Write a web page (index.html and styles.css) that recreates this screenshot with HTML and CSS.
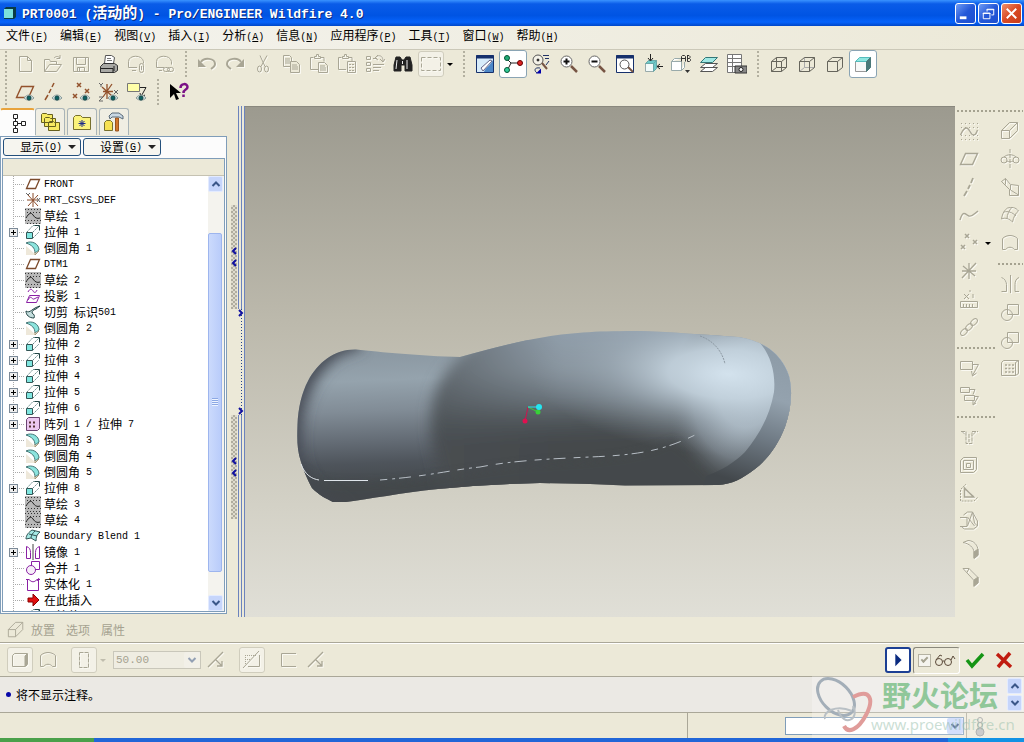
FILE: index.html
```
<!DOCTYPE html>
<html lang="zh-CN">
<head>
  <meta charset="UTF-8" />
  <title>PRT0001 (活动的) - Pro/ENGINEER Wildfire 4.0</title>
  <link rel="stylesheet" href="styles.css">
</head>
<body>
  <!-- Icon set -->
  <svg class="defs" width="0" height="0" aria-hidden="true">
    <symbol id="i-new" viewBox="0 0 20 20"><path d="M4.500 2.500h8l4 4v11h-12zM12.500 2.500v4h4"/></symbol>
    <symbol id="i-open" viewBox="0 0 20 20"><path d="M1.500 17.500v-12h5l1 2h6v3M1.500 17.500l5-7h12l-5 7zM11 4c2-2 4-2 6 0M17 1v3.500h-3.500"/></symbol>
    <symbol id="i-save" viewBox="0 0 20 20"><path d="M2.500 3.500h15v14h-15zM5.500 3.500v7h9v-7M6.500 17.500v-4h7v4M8.500 14v3"/></symbol>
    <symbol id="i-print" viewBox="0 0 20 20"><path d="M5.500 9.500l1-8h6l3 2-1 6" fill="#fff" stroke="#555"/><path d="M8 4.500h4M8 6.500h5" stroke="#777"/><path d="M1.500 12.500l3-3h11l3 2v5l-3 2h-14z" fill="#a8a8a4" stroke="#333"/><path d="M2 14.500h12v4M15 12v5" stroke="#222"/></symbol>
    <symbol id="i-mail" viewBox="0 0 20 20"><path d="M10 13.500H1.500v-6c0-7 14-7 15 0v2M5 16.500h4"/><rect x="12.500" y="9.500" width="4" height="9" rx="2"/><path d="M14.500 12v4"/></symbol>
    <symbol id="i-link" viewBox="0 0 20 20"><path d="M9 13.500H1.500v-6c0-7 14-7 15 0v3M4 16.500h3"/><rect x="8.500" y="13.500" width="6" height="4" rx="2"/><rect x="12.500" y="13.500" width="6" height="4" rx="2"/></symbol>
    <symbol id="i-undo" viewBox="0 0 20 20"><path d="M4 8c3-5 14-4 14 2 0 2-1 3-4 5" stroke-width="2"/><path d="M1 5v8h8z" fill="currentColor" stroke="none"/></symbol>
    <symbol id="i-redo" viewBox="0 0 20 20"><path d="M16 8c-3-5-14-4-14 2 0 2 1 3 4 5" stroke-width="2"/><path d="M19 5v8h-8z" fill="currentColor" stroke="none"/></symbol>
    <symbol id="i-cut" viewBox="0 0 20 20"><path d="M7 1.500l5 11M14 1.500l-6 11"/><ellipse cx="6.500" cy="15" rx="2" ry="3"/><ellipse cx="13.500" cy="15" rx="2" ry="3"/></symbol>
    <symbol id="i-copy" viewBox="0 0 20 20"><path d="M2.500 1.500h6l2 2v9h-8zM4 5h5M4 7h5M4 9h5"/><path d="M9.500 7.500h6l3 3v8h-9zM11 11h5M11 13h6M11 15h6" fill="#ece9d8"/></symbol>
    <symbol id="i-paste" viewBox="0 0 20 20"><path d="M9 15.500H1.500v-12h3M12 3.500h3v4M5.500 4.500v-2h2v-2h2v2h2v2z"/><path d="M9.500 8.500h6l3 3v7h-9zM11 12h5M11 14h6M11 16h6"/></symbol>
    <symbol id="i-pastes" viewBox="0 0 20 20"><path d="M9 15.500H1.500v-12h3M12 3.500h3v4M5.500 4.500v-2h2v-2h2v2h2v2z"/><path d="M10.500 7.500h8v11h-8zM12 10.500h2M15 10.500h2M12 13.500h2M15 13.500h2M12 16.500h2M15 16.500h2"/></symbol>
    <symbol id="i-regen" viewBox="0 0 20 20"><path d="M1.500 2.500h4v3h-4zM1.500 8.500h4v3h-4zM1.500 14.500h4v3h-4zM8 4.500h4M8 10.500h11M8 13.500h8M8 16.500h6M12 2c4-1 6 1 6 5M15 5l3 3 2-3M10 4l3-3M10 4l3 2"/></symbol>
    <symbol id="i-find" viewBox="0 0 20 20"><path d="M3 3h4l2 3h2l2-3h4l2 8v6h-7v-6H8v6H1v-6z" fill="#222"/><path d="M4 6l-1 9M14 6v9M9.500 7v3" stroke="#eee"/></symbol>
    <symbol id="i-select" viewBox="0 0 20 20"><path d="M.5 3.500h19v13H.5z" stroke-dasharray="4 2"/></symbol>
    <symbol id="i-repaint" viewBox="0 0 20 20"><path d="M1.500 1.500h17v17h-17z" fill="#d8ecfa" stroke="#16306c"/><path d="M1 3h18" stroke="#16306c" stroke-width="3"/><path d="M9 18c1-4 6-6 9-12v12z" fill="#4f88c8" stroke="none"/><path d="M6 14l2 3 9-10-2-1z" fill="#fff" stroke="#668"/></symbol>
    <symbol id="i-spin" viewBox="0 0 20 20"><path d="M3 4l5 5h9M8 9l-4 8"/><circle cx="4" cy="4" r="2.500" fill="#2a7" stroke="#053"/><circle cx="4" cy="16" r="2.500" fill="#3c9" stroke="#053"/><circle cx="17" cy="9" r="2.500" fill="#d22" stroke="#600"/></symbol>
    <symbol id="i-orient" viewBox="0 0 20 20"><circle cx="7" cy="6" r="5" fill="#f4f2e8" stroke="#555"/><path d="M11 9l5 6" stroke="#754" stroke-width="2"/><path d="M12 1.500h6M14 4.500h4M18 7l-3 4M9 14c-6-1-6 3-3 5" stroke="#236"/><path d="M5 19.500h5v-5z" fill="#00a" stroke="none"/><circle cx="7" cy="6" r="1" fill="#333"/></symbol>
    <symbol id="i-zoomin" viewBox="0 0 20 20"><path d="M12 12l6 6" stroke="#754" stroke-width="2.500"/><circle cx="7.500" cy="7.500" r="5.500" fill="#fff" stroke="#666"/><path d="M4.500 7.500h6M7.500 4.500v6" stroke="#111" stroke-width="2"/></symbol>
    <symbol id="i-zoomout" viewBox="0 0 20 20"><path d="M12 12l6 6" stroke="#754" stroke-width="2.500"/><circle cx="7.500" cy="7.500" r="5.500" fill="#fff" stroke="#666"/><path d="M4.500 7.500h6" stroke="#111" stroke-width="2"/></symbol>
    <symbol id="i-refit" viewBox="0 0 20 20"><path d="M1.500 1.500h17v17h-17z" fill="#fff" stroke="#16306c"/><path d="M1 3h18" stroke="#16306c" stroke-width="3"/><path d="M13 13l5 5" stroke="#754" stroke-width="2"/><circle cx="9.500" cy="10.500" r="4.500" stroke="#555"/></symbol>
    <symbol id="i-view" viewBox="0 0 20 20"><path d="M2.500 9.500h8v8h-8z" fill="#f2fafa" stroke="#9aa"/><path d="M2.500 9.500l3-3h8l-3 3zM10.500 17.500l3-3v-8l-3 3z" fill="#6cc8c8" stroke="#6aa8a8"/><path d="M7.500 0v6M5 4l2.500 3L10 4M20 12.500h-6M17 10l-3 2.500 3 2.500"/></symbol>
    <symbol id="i-saved" viewBox="0 0 20 20"><path d="M.5 7.500h10v9H.5zM.5 7.500l3-3h7M10.500 16.500l3-3V8" fill="#fff" stroke="#9aa"/><path d="M10.500 7.500v-5l1-1h2l1 1v5M10.500 4.500h4M16.500 1.500v6h2l1-1v-1l-1-1h-2M18 4.500l1-1v-1l-1-1h-2" stroke="#333"/><path d="M14 16h5l-2.500 3z" fill="#333" stroke="none"/></symbol>
    <symbol id="i-layers" viewBox="0 0 20 20"><path d="M1.500 17.500l5-4h12l-5 4zM1.500 13.500l5-4h12l-5 4z" fill="#fff" stroke="#555"/><path d="M1.500 8.500l5-5h12l-5 5z" fill="#9fe8e4" stroke="#377"/></symbol>
    <symbol id="i-camera" viewBox="0 0 20 20"><path d="M.5 .5h14v18H.5zM.5 4.500h14M.5 8.500h14M.5 12.500h14M5.500 .5v18" fill="#fff" stroke="#777"/><path d="M8 12h12v7H8z" fill="#888" stroke="#333"/><circle cx="14" cy="15.500" r="2" fill="#fff" stroke="#222"/></symbol>
    <symbol id="i-wire" viewBox="0 0 20 20"><path d="M2.500 7.500h10v10h-10zM7.500 3.500h10v10h-10zM2.500 7.500l5-4M12.500 7.500l5-4M12.500 17.500l5-4M2.500 17.500l5-4"/></symbol>
    <symbol id="i-hidden" viewBox="0 0 20 20"><path d="M7.500 3.500v10h10M2.500 17.500l5-4" stroke="#aaa"/><path d="M2.500 7.500h10v10h-10zM2.500 7.500l5-4h10v10l-5 4M12.500 7.500l5-4"/></symbol>
    <symbol id="i-nohid" viewBox="0 0 20 20"><path d="M2.500 7.500h10v10h-10zM2.500 7.500l5-4h10v10l-5 4M12.500 7.500l5-4"/></symbol>
    <symbol id="i-shade" viewBox="0 0 20 20"><path d="M2.500 7.500h11v10h-11z" fill="#f8f8f8" stroke="#999"/><path d="M2.500 7.500l4-4h11l-4 4z" fill="#8ee6e0" stroke="#5bb"/><path d="M13.500 7.500l4-4v10l-4 4z" fill="#4a7878" stroke="#4a7878"/></symbol>

    <symbol id="i-eye" viewBox="0 0 20 20"><path d="M9 16c3-4 7-4 10 0-3 3-7 3-10 0z" fill="#cdd" stroke="#8a9a98"/><circle cx="14" cy="16" r="2" fill="#0b6262" stroke="#144"/></symbol>
    <symbol id="i-plane" viewBox="0 0 20 20"><path d="M1.500 15.500l5-11h12l-5 11z" stroke-width="1.400"/></symbol>
    <symbol id="i-axis" viewBox="0 0 20 20"><path d="M2 18l3-5M6 11l2-4M9 5l2-4" stroke-width="1.500"/></symbol>
    <symbol id="i-points" viewBox="0 0 20 20"><path d="M6 1l4 4M10 1L6 5M14 7l4 4M18 7l-4 4M2 12l4 4M6 12l-4 4" stroke-width="1.500"/></symbol>
    <symbol id="i-csys" viewBox="0 0 20 20"><path d="M10 2v16M3 10h14M4 5l12 10M17 2L3 17" stroke-width="1.300"/></symbol>
    <symbol id="i-csys-xyz" viewBox="0 0 20 20"><path d="M8 2v15M4 9.500h10M3 5l10 9M13 2L4 15" stroke-width="1.300"/><path d="M0 1l2 2 2-2M2 3v2M15 8l4 4M19 8l-4 4M0 15h4l-4 4h4" stroke="#666"/></symbol>
    <symbol id="i-tag" viewBox="0 0 20 20"><path d="M.5 1.500h12v8H.5z" fill="#ffffa8" stroke="#777"/><path d="M13 5.500h6l-5 9M13 11l1 4 4-2" stroke="#222"/></symbol>
    <symbol id="i-help" viewBox="0 0 20 20"><path d="M1 2v14l4-4 2 6 3-1-3-6h5z" fill="#000" stroke="none"/><path d="M11.500 6c0-5 7-5 7-1 0 3-4 2-4 6M14.500 12.500v2.500" stroke="#7a1286" stroke-width="2.500"/></symbol>

    <symbol id="i-sketch" viewBox="0 0 20 20"><path d="M2 2.500h17M2 6.500h17M2 14.500h17M2 18.500h17" stroke-dasharray="1 3"/><path d="M1.500 14c2-4 3-7 6-7s4 7 7 7 3-3 4-5" stroke-width="1.400"/></symbol>
    <symbol id="i-line" viewBox="0 0 20 20"><path d="M5 19l3-5M9 12l2-4M12 6l2-5" stroke-width="1.800"/></symbol>
    <symbol id="i-curve" viewBox="0 0 20 20"><path d="M1 15c3-10 5-6 9-4 3 1 5-2 9-5" stroke-width="1.400"/></symbol>
    <symbol id="i-ruler" viewBox="0 0 20 20"><path d="M1.500 12.500h17v6h-17zM4.500 15v3M7.500 15v3M10.500 15v3M13.500 15v3M5 5l5 5M10 5l-5 5M11 1v2M14 5v4"/></symbol>
    <symbol id="i-chain" viewBox="0 0 20 20"><ellipse cx="5" cy="15" rx="4" ry="2.500" transform="rotate(-45 5 15)"/><ellipse cx="10" cy="10" rx="4" ry="2.500" transform="rotate(-45 10 10)"/><ellipse cx="15" cy="5" rx="4" ry="2.500" transform="rotate(-45 15 5)"/></symbol>
    <symbol id="i-note" viewBox="0 0 20 20"><path d="M1.500 3.500h12v8h-12zM13.500 6.500h6l-6 11M12.500 13l1 5 4-3"/></symbol>
    <symbol id="i-notes" viewBox="0 0 20 20"><path d="M1.500 1.500h9v5h-9zM5.500 9.500h10v5h-10zM11 3.500h5l-2 5M16 10.500h3.500l-5 8M14 15v4l3-2"/></symbol>
    <symbol id="i-hole" viewBox="0 0 20 20"><path d="M2 4.500h5v12h6v-12h6M3 4.500l4 4M17 4.500l-4 4M10 7v8" stroke-dasharray="4 1"/></symbol>
    <symbol id="i-shell" viewBox="0 0 20 20"><path d="M1.500 5.500l3-3h13v12l-3 3h-13zM4.500 5.500h10v9h-10zM7.500 8.500h4v4h-4z"/></symbol>
    <symbol id="i-rib" viewBox="0 0 20 20"><path d="M1.500 7v11h13M2 6l5-5M15 18l4-4" stroke-dasharray="2 1"/><path d="M5.500 5v9h9zM5 5l10 9" stroke-width="1.500"/></symbol>
    <symbol id="i-draft" viewBox="0 0 20 20"><path d="M1 6.500h7v9H1M4.500 4l4-3h5l5 9v5l-4 3h-9l-3-2M13.500 1l-5 14M13.500 1l2 11 3 3M8.500 6l7 9"/></symbol>
    <symbol id="i-round" viewBox="0 0 20 20"><path d="M4 3.500l5-2c6 0 10 5 10 10v5l-4 3v-6c0-5-5-9-11-10z"/><path d="M15 13l4-3v6l-4 3z" fill="currentColor"/></symbol>
    <symbol id="i-chamfer" viewBox="0 0 20 20"><path d="M4 1.500h6l9 9v5l-4 4v-6zM10 1.500l-2 4"/><path d="M15 13l4-3v6l-4 3z" fill="currentColor"/></symbol>
    <symbol id="i-extrude" viewBox="0 0 20 20"><path d="M1.500 9.500h8v8h-8zM1.500 9.500l8-8h8v8l-8 8M9.500 9.500l8-8" /></symbol>
    <symbol id="i-revolve" viewBox="0 0 20 20"><path d="M10 0v20" stroke-dasharray="4 1"/><circle cx="4" cy="11" r="3"/><circle cx="16" cy="11" r="3"/><path d="M4 8c3-3 9-3 12 0M7 12c2 1 4 1 6 0"/></symbol>
    <symbol id="i-sweep" viewBox="0 0 20 20"><path d="M1.500 4.500l4-3 5 6 8 1v10h-9v-6zM1.500 4.500l8 8M5.500 1.500v6M10.500 8v5l8 5"/></symbol>
    <symbol id="i-blend" viewBox="0 0 20 20"><path d="M1.500 14c1-6 3-9 6-11 4-1 8-1 11 3-3 2-5 6-6 11-3-3-7-5-11-3zM4 7c4-1 8 0 12 4M7 14c0-5 2-8 5-12"/></symbol>
    <symbol id="i-style" viewBox="0 0 20 20"><path d="M2.500 16.500v-11c4-4 11-4 15 0v11h-3c-2-3-7-3-9 0z"/></symbol>
    <symbol id="i-mirror" viewBox="0 0 20 20"><path d="M10.500 1v18M1.500 17.500h5v-7c0-3-2-6-5-7M19 17.500h-4v-7c0-3 1-6 4-7"/></symbol>
    <symbol id="i-merge" viewBox="0 0 20 20"><circle cx="7" cy="13" r="5.500"/><path d="M7.500 2.500h11v10h-11z"/></symbol>
    <symbol id="i-pattern" viewBox="0 0 20 20"><path d="M1.500 4.500l2-2h15v13l-3 2h-14zM15.500 17.500v-13l3-2"/><path d="M5 7h9M5 10.500h9M5 14h9" stroke-width="1.600" stroke-dasharray="2 1.500"/></symbol>

    <!-- Model tree icons -->
    <symbol id="t-plane" viewBox="0 0 16 16"><path d="M1.500 12.500l4-9h9l-4 9z" fill="#fff" stroke="#7b4a2c" stroke-width="1.300"/></symbol>
    <symbol id="t-csys" viewBox="0 0 16 16"><path d="M8 1v14M2 8h11M3 3l10 11M13 3L3 14" stroke="#8a4a28"/><path d="M1 1l2 2 2-2M12 6l3 4M15 6l-3 4" stroke="#666"/></symbol>
    <symbol id="t-sketch" viewBox="0 0 16 16"><path d="M0 0h16v16H0z" fill="#b8b8b8" stroke="none"/><path d="M0 1.500h16M2 4.500h14M0 12.500h16M2 15.500h14" stroke="#333" stroke-dasharray="1 2"/><path d="M1 10c3-5 5-6 7-3s4 4 7 3" stroke="#222"/></symbol>
    <symbol id="t-extrude" viewBox="0 0 16 16"><path d="M2 8l6-6.500h6M8 8l6-6M8 14l6-6" stroke="#688" stroke-dasharray="2 1"/><path d="M1.500 8.500h6v6h-6z" fill="#7fe6e0" stroke="#355"/><path d="M10 1.500h4.500v5" stroke="#244"/></symbol>
    <symbol id="t-round" viewBox="0 0 16 16"><path d="M1 6l10 9H1z" fill="#eee8da"/><path d="M1 3c6-3 13 1 13 7l-4 3c0-5-3-8-9-10z" fill="#8ce4de" stroke="#477"/><path d="M10 12v3l4-4" stroke="#a97"/></symbol>
    <symbol id="t-project" viewBox="0 0 16 16"><path d="M3 4c2-4 4-3 5-1s3 2 4-1M1.500 14.500l3-7h10l-3 7zM3 12c3-6 4 0 6-1l4-2" stroke="#8a20a4"/></symbol>
    <symbol id="t-trim" viewBox="0 0 16 16"><path d="M1 7c4 3 6-3 14-5l-4 3c-3 1-4 2-4 4 2 1 3 3 2 5-5 0-8-3-8-7z" fill="#c4dede" stroke="#244"/></symbol>
    <symbol id="t-pattern" viewBox="0 0 16 16"><path d="M1.500 3.500l2-2h11v11l-2 2h-11z" fill="#ecc8f0" stroke="#6b4470"/><path d="M4 6.500h8M4 10.500h8" stroke="#533" stroke-width="2" stroke-dasharray="2 2"/></symbol>
    <symbol id="t-blend" viewBox="0 0 16 16"><path d="M1 11c0-4 3-7 6-9l8 2c-3 2-4 5-4 9l-5-3zM4 6l8 2M6 10c0-3 2-5 4-7" fill="#a4e8e4" stroke="#355"/></symbol>
    <symbol id="t-mirror" viewBox="0 0 16 16"><path d="M8 0v16" stroke="#444"/><path d="M1.500 14.500v-12c3 1 4 3 4 6v6zM14.500 14.500v-12c-3 1-4 3-4 6v6z" stroke="#8a20a4"/></symbol>
    <symbol id="t-merge" viewBox="0 0 16 16"><path d="M6.500 1.500h8v8h-8z" stroke="#8a20a4"/><circle cx="6" cy="10" r="4.500" fill="#f6eef8" stroke="#8a20a4"/></symbol>
    <symbol id="t-solid" viewBox="0 0 16 16"><path d="M1 3.500h3c3 3 5 3 8 0h3M2.500 4v10.500h11V4M12 5l2-3" stroke="#8a20a4"/></symbol>
    <symbol id="t-insert" viewBox="0 0 16 16"><path d="M3 6h5V2l6 6-6 6v-4H3z" fill="#e01010" stroke="#800"/></symbol>

    <symbol id="chev-up" viewBox="0 0 10 10"><path d="M1.500 7L5 3.500 8.500 7" stroke="#3a5688" stroke-width="2"/></symbol>
    <symbol id="chev-down" viewBox="0 0 10 10"><path d="M1.500 3L5 6.500 8.500 3" stroke="#3a5688" stroke-width="2"/></symbol>
  </svg>

  <header class="titlebar">
    <svg class="app-icon" viewBox="0 0 14 14"><path d="M1 3l2-2h10v10l-2 2H1z" fill="#0a3b46"/><path d="M1 3h9v9H1z" fill="#7be0dc"/></svg>
    <h1>PRT0001 (<span class="zh">活动的</span>) - Pro/ENGINEER Wildfire 4.0</h1>
    <div class="window-buttons">
      <button aria-label="最小化"><svg viewBox="0 0 20 20"><path d="M4 14.500h7" stroke-width="3"/></svg></button>
      <button aria-label="还原"><svg viewBox="0 0 20 20"><path d="M8.500 8V5.500h7v6H13M4.500 9.500h7v6h-7zM4 10h8M8 6h8"/></svg></button>
      <button class="close" aria-label="关闭"><svg viewBox="0 0 20 20"><path d="M5 5l10 10M15 5L5 15" stroke-width="2"/></svg></button>
    </div>
  </header>

  <nav class="menubar">
    <a href="#">文件<span class="en">(<u>F</u>)</span></a>
    <a href="#">编辑<span class="en">(<u>E</u>)</span></a>
    <a href="#">视图<span class="en">(<u>V</u>)</span></a>
    <a href="#">插入<span class="en">(<u>I</u>)</span></a>
    <a href="#">分析<span class="en">(<u>A</u>)</span></a>
    <a href="#">信息<span class="en">(<u>N</u>)</span></a>
    <a href="#">应用程序<span class="en">(<u>P</u>)</span></a>
    <a href="#">工具<span class="en">(<u>T</u>)</span></a>
    <a href="#">窗口<span class="en">(<u>W</u>)</span></a>
    <a href="#">帮助<span class="en">(<u>H</u>)</span></a>
  </nav>

  <!-- Toolbars -->
  <div class="toolbar">
    <span class="grip first"></span>
    <button class="tool dim" aria-label="新建"><svg><use href="#i-new"/></svg></button>
    <button class="tool dim" aria-label="打开"><svg><use href="#i-open"/></svg></button>
    <button class="tool dim" aria-label="保存"><svg><use href="#i-save"/></svg></button>
    <button class="tool" aria-label="打印"><svg><use href="#i-print"/></svg></button>
    <button class="tool dim" aria-label="发送邮件"><svg><use href="#i-mail"/></svg></button>
    <button class="tool dim" aria-label="发送链接"><svg><use href="#i-link"/></svg></button>
    <span class="grip"></span>
    <button class="tool dim" aria-label="撤消"><svg><use href="#i-undo"/></svg></button>
    <button class="tool dim" aria-label="重做"><svg><use href="#i-redo"/></svg></button>
    <button class="tool dim" aria-label="剪切"><svg><use href="#i-cut"/></svg></button>
    <button class="tool dim" aria-label="复制"><svg><use href="#i-copy"/></svg></button>
    <button class="tool dim" aria-label="粘贴"><svg><use href="#i-paste"/></svg></button>
    <button class="tool dim" aria-label="选择性粘贴"><svg><use href="#i-pastes"/></svg></button>
    <button class="tool dim" aria-label="再生"><svg><use href="#i-regen"/></svg></button>
    <button class="tool" aria-label="查找"><svg><use href="#i-find"/></svg></button>
    <button class="tool dim raised" aria-label="选取框"><svg><use href="#i-select"/></svg></button>
    <button class="drop" aria-label="选取方式"></button>
    <span class="grip"></span>
    <button class="tool" aria-label="重画"><svg><use href="#i-repaint"/></svg></button>
    <button class="tool on" aria-label="旋转中心"><svg><use href="#i-spin"/></svg></button>
    <button class="tool" aria-label="定向模式"><svg><use href="#i-orient"/></svg></button>
    <button class="tool" aria-label="放大"><svg><use href="#i-zoomin"/></svg></button>
    <button class="tool" aria-label="缩小"><svg><use href="#i-zoomout"/></svg></button>
    <button class="tool" aria-label="重新调整"><svg><use href="#i-refit"/></svg></button>
    <button class="tool" aria-label="重定向"><svg><use href="#i-view"/></svg></button>
    <button class="tool" aria-label="视图列表"><svg><use href="#i-saved"/></svg></button>
    <button class="tool" aria-label="层"><svg><use href="#i-layers"/></svg></button>
    <button class="tool" aria-label="视图管理器"><svg><use href="#i-camera"/></svg></button>
    <span class="grip"></span>
    <button class="tool line" aria-label="线框"><svg><use href="#i-wire"/></svg></button>
    <button class="tool line" aria-label="隐藏线"><svg><use href="#i-hidden"/></svg></button>
    <button class="tool line" aria-label="无隐藏线"><svg><use href="#i-nohid"/></svg></button>
    <button class="tool on" aria-label="着色"><svg><use href="#i-shade"/></svg></button>
  </div>
  <div class="toolbar">
    <span class="grip first"></span>
    <button class="tool datum" aria-label="基准平面开关"><svg><use href="#i-plane"/><use href="#i-eye"/></svg></button>
    <button class="tool datum" aria-label="基准轴开关"><svg><use href="#i-axis"/><use href="#i-eye"/></svg></button>
    <button class="tool datum" aria-label="基准点开关"><svg><use href="#i-points"/><use href="#i-eye"/></svg></button>
    <button class="tool datum" aria-label="坐标系开关"><svg><use href="#i-csys-xyz"/><use href="#i-eye"/></svg></button>
    <button class="tool datum" aria-label="注释开关"><svg><use href="#i-tag"/><use href="#i-eye"/></svg></button>
    <span class="grip"></span>
    <button class="tool" aria-label="上下文帮助"><svg><use href="#i-help"/></svg></button>
  </div>

  <main class="workspace">
    <aside class="navigator">
      <div class="tabs">
        <button class="tab active" aria-label="模型树"><svg viewBox="0 0 20 20"><path d="M5.500 1.500h4v4h-4zM5.500 8.500h4v4h-4zM5.500 15.500h4v4h-4zM13.500 8.500h4v4h-4zM7.500 5.500v3M7.500 12.500v3M9.500 10.500h4"/></svg></button>
        <button class="tab" aria-label="文件夹浏览器"><svg viewBox="0 0 20 20"><path d="M1.500 2.500l1-1h4l1 1h5v8h-11zM4.500 6.500l1-1h4l1 1h5v8h-11zM8.500 10.500l1-1h4l1 1h5v8h-11z" fill="#f7ea62" stroke="#66601e"/></svg></button>
        <button class="tab" aria-label="收藏夹"><svg viewBox="0 0 20 20"><path d="M1.500 5.500l2-2h5l2 2h8v12h-17z" fill="#fbf37a" stroke="#77702e"/><path d="M10 8v7M6.500 11.500h7M7.500 9l5 5M12.500 9l-5 5" stroke="#1a2a8a"/></svg></button>
        <button class="tab" aria-label="连接"><svg viewBox="0 0 20 20"><path d="M.5 10.500l2-2h4l2 2v8h-8z" fill="#f7e152" stroke="#77702e"/><path d="M11.500 6h3v13h-3z" fill="#d2762c" stroke="#9a5420"/><path d="M5 4l3-3h7l4 3v3l-4-2H8l-2 2z" fill="#c9d8e4" stroke="#5b6a78"/></svg></button>
      </div>
      <div class="panel">
        <div class="panel-buttons">
          <button>显示<span class="en">(<u>O</u>)</span></button>
          <button>设置<span class="en">(<u>G</u>)</span></button>
        </div>
        <div class="tree-box">
          <div class="tree-head"></div>
          <div class="tree-body">
            <ul class="tree">
              <li><svg><use href="#t-plane"/></svg><span class="en">FRONT</span></li>
              <li><svg><use href="#t-csys"/></svg><span class="en">PRT_CSYS_DEF</span></li>
              <li><svg><use href="#t-sketch"/></svg>草绘<span class="en"> 1</span></li>
              <li class="has-kids"><svg><use href="#t-extrude"/></svg>拉伸<span class="en"> 1</span></li>
              <li><svg><use href="#t-round"/></svg>倒圆角<span class="en"> 1</span></li>
              <li><svg><use href="#t-plane"/></svg><span class="en">DTM1</span></li>
              <li><svg><use href="#t-sketch"/></svg>草绘<span class="en"> 2</span></li>
              <li><svg><use href="#t-project"/></svg>投影<span class="en"> 1</span></li>
              <li><svg><use href="#t-trim"/></svg>切剪<span class="en"> </span>标识<span class="en">501</span></li>
              <li><svg><use href="#t-round"/></svg>倒圆角<span class="en"> 2</span></li>
              <li class="has-kids"><svg><use href="#t-extrude"/></svg>拉伸<span class="en"> 2</span></li>
              <li class="has-kids"><svg><use href="#t-extrude"/></svg>拉伸<span class="en"> 3</span></li>
              <li class="has-kids"><svg><use href="#t-extrude"/></svg>拉伸<span class="en"> 4</span></li>
              <li class="has-kids"><svg><use href="#t-extrude"/></svg>拉伸<span class="en"> 5</span></li>
              <li class="has-kids"><svg><use href="#t-extrude"/></svg>拉伸<span class="en"> 6</span></li>
              <li class="has-kids"><svg><use href="#t-pattern"/></svg>阵列<span class="en"> 1 / </span>拉伸<span class="en"> 7</span></li>
              <li><svg><use href="#t-round"/></svg>倒圆角<span class="en"> 3</span></li>
              <li><svg><use href="#t-round"/></svg>倒圆角<span class="en"> 4</span></li>
              <li><svg><use href="#t-round"/></svg>倒圆角<span class="en"> 5</span></li>
              <li class="has-kids"><svg><use href="#t-extrude"/></svg>拉伸<span class="en"> 8</span></li>
              <li><svg><use href="#t-sketch"/></svg>草绘<span class="en"> 3</span></li>
              <li><svg><use href="#t-sketch"/></svg>草绘<span class="en"> 4</span></li>
              <li><svg><use href="#t-blend"/></svg><span class="en">Boundary Blend 1</span></li>
              <li class="has-kids"><svg><use href="#t-mirror"/></svg>镜像<span class="en"> 1</span></li>
              <li><svg><use href="#t-merge"/></svg>合并<span class="en"> 1</span></li>
              <li><svg><use href="#t-solid"/></svg>实体化<span class="en"> 1</span></li>
              <li><svg><use href="#t-insert"/></svg>在此插入</li>
              <li><svg><use href="#t-extrude"/></svg><span class="en"> *</span>拉伸</li>
            </ul>
            <div class="scrollbar">
              <button aria-label="向上滚动"><svg><use href="#chev-up"/></svg></button>
              <div class="track"><div class="thumb"></div></div>
              <button aria-label="向下滚动"><svg><use href="#chev-down"/></svg></button>
            </div>
          </div>
        </div>
      </div>
    </aside>

    <div class="splitter">
      <div class="hatches">
        <span class="hatch"><svg viewBox="0 0 6 20"><path d="M5 1L2 4l3 3M5 13l-3 3 3 3"/></svg></span>
        <span class="hatch"><svg viewBox="0 0 6 20"><path d="M5 1L2 4l3 3M5 13l-3 3 3 3"/></svg></span>
      </div>
      <div class="rails">
        <span class="dots">
          <svg viewBox="0 0 6 8"><path d="M1 1l3 3-3 3"/></svg>
          <svg viewBox="0 0 6 8"><path d="M1 1l3 3-3 3"/></svg>
        </span>
      </div>
    </div>

    <section class="viewport">
      <svg viewBox="245 107 710 510" preserveAspectRatio="xMidYMid meet" role="img" aria-label="着色模型">
        <defs>
          <clipPath id="body"><path d="M356 349.500C380 352 420 356 460 357C485 350 510 343 545 337C575 332 600 331 642 331C670 332 710 335 738 337C750 339 758 342 765 346C776 352 785 363 789 376C793 392 791 410 785 427C778 445 768 459 755 469C742 479 732 484 718 485L625 485.500L590 484L540 483C500 484 470 486 438 489C400 493 370 499 346 502L333 502C325 498 319 495 312 488C307 478 304 472 301 462C297 450 297 440 297.500 425C298 408 302 392 308 381C318 362 335 349 356 349.500z"/></clipPath>
          <linearGradient id="neck" gradientUnits="userSpaceOnUse" x1="0" y1="349" x2="6" y2="502">
            <stop offset="0" stop-color="#85919b"/><stop offset=".3" stop-color="#95a3ad"/><stop offset=".5" stop-color="#818c96"/><stop offset=".7" stop-color="#636b74"/><stop offset=".84" stop-color="#4e545b"/><stop offset="1" stop-color="#43484b"/>
          </linearGradient>
          <linearGradient id="hull" gradientUnits="userSpaceOnUse" x1="560" y1="331" x2="566" y2="485">
            <stop offset="0" stop-color="#919fac"/><stop offset=".25" stop-color="#87939d"/><stop offset=".42" stop-color="#6e7880"/><stop offset=".58" stop-color="#50565a"/><stop offset=".7" stop-color="#44494c"/><stop offset="1" stop-color="#44494c"/>
          </linearGradient>
          <linearGradient id="crease" gradientUnits="userSpaceOnUse" x1="425" y1="0" x2="560" y2="0">
            <stop offset="0" stop-color="#4b5054" stop-opacity=".7"/><stop offset="1" stop-color="#4b5054" stop-opacity="0"/>
          </linearGradient>
          <radialGradient id="shine" gradientUnits="userSpaceOnUse" cx="0" cy="0" r="1" gradientTransform="translate(728 374) rotate(3) scale(200 82)">
            <stop offset="0" stop-color="#d3e2ed"/><stop offset=".3" stop-color="#c3d2dd" stop-opacity=".9"/><stop offset=".6" stop-color="#a5b3be" stop-opacity=".5"/><stop offset="1" stop-color="#8a96a0" stop-opacity="0"/>
          </radialGradient>
          <radialGradient id="nose" gradientUnits="userSpaceOnUse" cx="0" cy="0" r="1" gradientTransform="translate(752 385) rotate(20) scale(80 108)">
            <stop offset="0" stop-color="#c9d8e3"/><stop offset=".4" stop-color="#b4c2cd" stop-opacity=".95"/><stop offset=".7" stop-color="#87929c" stop-opacity=".7"/><stop offset="1" stop-color="#50565a" stop-opacity="0"/>
          </radialGradient>
          <linearGradient id="rim" gradientUnits="userSpaceOnUse" x1="780" y1="350" x2="740" y2="482">
            <stop offset="0" stop-color="#8d9ba7"/><stop offset=".35" stop-color="#94a2ae"/><stop offset=".65" stop-color="#6f7a84"/><stop offset="1" stop-color="#43484c"/>
          </linearGradient>
          <filter id="soft" x="-20%" y="-20%" width="140%" height="140%"><feGaussianBlur stdDeviation="7"/></filter>
          <filter id="softer" x="-20%" y="-20%" width="140%" height="140%"><feGaussianBlur stdDeviation="4"/></filter>
        </defs>
        <g clip-path="url(#body)">
          <path d="M290 340h260v170h-260z" fill="url(#neck)"/>
          <path d="M360 340C315 345 292 395 292 440C292 480 310 500 345 512" fill="none" stroke="#444a52" stroke-width="18" filter="url(#soft)"/>
          <g filter="url(#soft)">
            <path d="M475 345C445 365 431 390 431 420C428 455 445 470 440 520H850V300H500z" fill="url(#hull)"/>
            <path d="M475 345C445 365 431 390 431 420C428 455 445 470 440 520H560V300H500z" fill="url(#crease)"/>
          </g>
          <path d="M630 270h190v230h-190z" fill="url(#nose)"/>
          <path d="M500 280h320v220h-320z" fill="url(#shine)"/>
          <path d="M301 468C320 487 350 484 400 481C450 476 500 465 545 463C600 460 650 456 672 440L715 480V505L330 520L300 490z" fill="#44494c" opacity=".6" filter="url(#softer)"/>
          <path d="M757 340C770 352 776 372 774 392C770 415 760 434 745 452C734 463 722 470 706 476L700 495H810V330z" fill="url(#rim)"/>
        </g>
        <path d="M301 464C305 475 312 479 319 480M324 480.500h44" fill="none" stroke="#dfe5ea"/>
        <path d="M380 480C430 476 450 470 480 467C510 461 545 459 590 457C640 455 665 450 697 434" fill="none" stroke="#b7bec5" stroke-dasharray="7 5 3 4 12 8"/>
        <path d="M700 336C712 340 722 350 725 364" fill="none" stroke="#8c98a2" stroke-dasharray="2 1"/>
        <path d="M528 407l-3 14" stroke="#d0124e"/><path d="M528 407l10 5" stroke="#38d038"/><path d="M528 407h11" stroke="#25e6f0"/>
        <circle cx="525" cy="421" r="2.500" fill="#e01050"/><circle cx="538" cy="412" r="2.500" fill="#38d038"/><circle cx="539" cy="407" r="3" fill="#25e6f0"/>
      </svg>
    </section>

    <aside class="feature-bar">
      <div class="feature-col">
        <span class="bar first"></span>
        <button class="tool dim" aria-label="草绘"><svg><use href="#i-sketch"/></svg></button>
        <button class="tool dim" aria-label="基准平面"><svg><use href="#i-plane"/></svg></button>
        <button class="tool dim" aria-label="基准轴"><svg><use href="#i-line"/></svg></button>
        <button class="tool dim" aria-label="基准曲线"><svg><use href="#i-curve"/></svg></button>
        <div class="pair"><button class="tool dim" aria-label="基准点"><svg><use href="#i-points"/></svg></button><button class="drop" aria-label="基准点类型"></button></div>
        <button class="tool dim" aria-label="坐标系"><svg><use href="#i-csys"/></svg></button>
        <button class="tool dim" aria-label="分析特征"><svg><use href="#i-ruler"/></svg></button>
        <button class="tool dim" aria-label="参照"><svg><use href="#i-chain"/></svg></button>
        <span class="bar"></span>
        <button class="tool dim" aria-label="注释"><svg><use href="#i-note"/></svg></button>
        <button class="tool dim" aria-label="注释元素"><svg><use href="#i-notes"/></svg></button>
        <span class="bar"></span>
        <button class="tool dim" aria-label="孔"><svg><use href="#i-hole"/></svg></button>
        <button class="tool dim" aria-label="壳"><svg><use href="#i-shell"/></svg></button>
        <button class="tool dim" aria-label="筋"><svg><use href="#i-rib"/></svg></button>
        <button class="tool dim" aria-label="拔模"><svg><use href="#i-draft"/></svg></button>
        <button class="tool dim" aria-label="倒圆角"><svg><use href="#i-round"/></svg></button>
        <button class="tool dim" aria-label="倒角"><svg><use href="#i-chamfer"/></svg></button>
      </div>
      <div class="feature-col narrow">
        <span class="bar first"></span>
        <button class="tool dim" aria-label="拉伸"><svg><use href="#i-extrude"/></svg></button>
        <button class="tool dim" aria-label="旋转"><svg><use href="#i-revolve"/></svg></button>
        <button class="tool dim" aria-label="扫描"><svg><use href="#i-sweep"/></svg></button>
        <button class="tool dim" aria-label="边界混合"><svg><use href="#i-blend"/></svg></button>
        <button class="tool dim" aria-label="造型"><svg><use href="#i-style"/></svg></button>
        <span class="bar"></span>
        <button class="tool dim" aria-label="镜像"><svg><use href="#i-mirror"/></svg></button>
        <button class="tool dim" aria-label="合并"><svg><use href="#i-merge"/></svg></button>
        <button class="tool dim" aria-label="修剪"><svg><use href="#i-merge"/></svg></button>
        <button class="tool dim" aria-label="阵列"><svg><use href="#i-pattern"/></svg></button>
      </div>
    </aside>
  </main>

  <!-- Dashboard -->
  <div class="dash-tabs">
    <svg class="dim"><use href="#i-extrude"/></svg>
    <button disabled>放置</button>
    <button disabled>选项</button>
    <button disabled>属性</button>
  </div>
  <div class="dashboard">
    <button class="tool dim raised" aria-label="实体"><svg viewBox="0 0 20 20"><path d="M2.500 5.500l2-2h13v11l-2 2h-13z"/><path d="M15 6l2-2v10l-2 2z" fill="currentColor"/></svg></button>
    <button class="tool dim" aria-label="曲面"><svg><use href="#i-style"/></svg></button>
    <span class="gap"></span>
    <button class="tool dim raised" aria-label="深度"><svg viewBox="0 0 20 20"><path d="M5.500 2.500h9v15h-9z" stroke-dasharray="4 1"/></svg></button>
    <button class="drop dim" aria-label="深度选项"></button>
    <div class="combo depth"><select aria-label="深度值" disabled><option>50.00</option></select><svg><use href="#chev-down"/></svg></div>
    <button class="tool dim" aria-label="反向"><svg viewBox="0 0 20 20"><path d="M2 17L17 2M10 10l6 6M16 11v5h-5" stroke-width="1.300"/></svg></button>
    <span class="gap"></span>
    <button class="tool dim raised" aria-label="去除材料"><svg viewBox="0 0 20 20"><path d="M3 5.500h11M3.500 5v10M3 9.500h6" stroke-dasharray="1 1"/><path d="M1 18L17 1M6 16.500h11.500V5"/></svg></button>
    <span class="gap"></span>
    <button class="tool dim" aria-label="加厚"><svg viewBox="0 0 20 20"><path d="M18 3.500H3.500v13H18"/></svg></button>
    <button class="tool dim" aria-label="反向加厚"><svg viewBox="0 0 20 20"><path d="M2 17L17 2M10 10l6 6M16 11v5h-5" stroke-width="1.300"/></svg></button>
    <div class="dash-right">
      <button class="play" aria-label="继续"><svg viewBox="0 0 20 20"><path d="M7 3l7 7-7 7z" fill="#0a2a80" stroke="none"/></svg></button>
      <label class="preview"><input type="checkbox" checked disabled aria-label="预览"><svg viewBox="0 0 22 14"><circle cx="5" cy="9" r="3.500"/><circle cx="14" cy="9" r="3.500"/><path d="M8.500 8h2M2 7l4-5 2 1M17 7l2-4 2 3"/></svg></label>
      <button class="tool" aria-label="确定"><svg viewBox="0 0 20 20"><path d="M2 10l5 6L18 4" stroke="#159515" stroke-width="3.500"/></svg></button>
      <button class="tool" aria-label="取消"><svg viewBox="0 0 20 20"><path d="M3 4l14 13M16 3L4 17" stroke="#c01c10" stroke-width="3.500"/></svg></button>
    </div>
  </div>

  <footer class="footer">
    <div class="message">
      <p>将不显示注释。</p>
      <div class="scrollbar">
        <button aria-label="上一条"><svg><use href="#chev-up"/></svg></button>
        <button aria-label="下一条"><svg><use href="#chev-down"/></svg></button>
      </div>
    </div>
    <div class="status">
      <div class="status-left"></div>
      <div class="status-filter">
        <div class="combo filter"><select aria-label="过滤器"><option></option></select><svg><use href="#chev-down"/></svg></div>
      </div>
      <svg class="light" viewBox="0 0 12 20"><circle cx="6" cy="3" r="2.500"/><circle cx="6" cy="8" r="2.500"/><circle cx="6" cy="15" r="4" fill="#bbb"/></svg>
    </div>
    <div class="watermark">
      <svg viewBox="0 0 60 60">
        <ellipse cx="22" cy="21" rx="22" ry="14" transform="rotate(45 22 21)" fill="none" stroke="#a3aeb8" stroke-width="3"/>
        <path d="M39 21C57 12 60 24 52 39C44 54 34 58 30 50" fill="none" stroke="#e09c9a" stroke-width="4"/>
        <path d="M38 35C22 28 8 36 11 43M24 34C30 52 46 43 39 30" fill="none" stroke="#b9c0c5" stroke-width="2"/>
      </svg>
      <div class="brand"><strong>野火论坛</strong><span>www.proewildfire.cn</span></div>
    </div>
  </footer>
  <div class="taskbar"><span class="start"></span><span class="tasks"></span><span class="tray"></span></div>
</body>
</html>
```
FILE: styles.css
```
* { box-sizing: border-box; }
body {
  margin: 0; min-height: 100vh; height: 100vh; overflow: hidden;
  display: flex; flex-direction: column;
  background: #ece9d8; color: #000;
  font-family: "Noto Sans CJK SC", sans-serif; font-size: 12px; line-height: 16px;
}
button {
  border: 0; padding: 0; margin: 0; background: none;
  color: inherit; font: inherit;
}
svg { display: block; fill: none; stroke: none; }
.defs { position: absolute; }
.en {
  font-family: "Liberation Mono", monospace; font-size: 10px; white-space: pre;
}

/* title and menus */
.titlebar {
  display: flex; align-items: center; flex: none;
  height: 26px; padding: 0 2px 0 3px;
  background: linear-gradient(#3a93ff 0, #0a5ce8 15%, #0054e3 60%, #0663fb 85%, #0047c8 100%);
}
.app-icon { width: 14px; height: 14px; }
.titlebar h1 {
  flex: 1; margin: 0 0 0 5px; color: #fff;
  font: bold 13px/24px "Liberation Mono", monospace;
  text-shadow: 1px 1px 0 #0a2a80; white-space: nowrap;
}
.titlebar .zh { font-family: "Noto Sans CJK SC", sans-serif; font-size: 15px; }
.window-buttons { display: flex; gap: 2px; }
.window-buttons button {
  width: 21px; height: 21px; border: 1px solid #fff; border-radius: 3px;
  background: linear-gradient(135deg, #6f9cf5, #2458d8 50%, #1d4fd0);
}
.window-buttons .close { background: linear-gradient(135deg, #f0906c, #d94a24 50%, #c83c18); }
.window-buttons svg { width: 19px; height: 19px; stroke: #fff; }
.menubar {
  display: flex; gap: 12px; flex: none;
  height: 24px; padding: 1px 6px 0;
  background: linear-gradient(90deg, #f4f3ee, #ece9d8); border-bottom: 1px solid #cbc8b8;
}
.menubar a { color: #000; text-decoration: none; white-space: nowrap; }

/* toolbars */
.toolbar { display: flex; align-items: center; flex: none; height: 28px; }
.tool {
  display: flex; align-items: center; justify-content: center; flex: none;
  width: 28px; height: 28px; border-radius: 3px; color: #222;
}
.tool svg { width: 20px; height: 20px; stroke: currentColor; }
.tool.line { color: #66655c; }
.tool.datum { color: #93522c; }
.dim { color: #a9a695; stroke: currentColor; }
.dim svg { filter: drop-shadow(1px 1px 0 #faf9f2); }
.tool.dim { color: #a9a695; }
.tool.on { background: #fff; border: 1px solid #8aa4b4; }
.tool.raised { width: 26px; height: 26px; margin: 0 1px; background: #f3f1e7; border: 1px solid #d0cdbd; }
.drop { flex: none; width: 10px; height: 28px; margin-right: 2px; }
.drop::before {
  content: ""; display: block; margin: 0 auto; width: 0;
  border: 3px solid transparent; border-top-color: currentColor; border-bottom: 0;
}
.grip { flex: none; width: 14px; height: 26px; }
.grip::before {
  content: ""; display: block; width: 2px; height: 26px; margin: 0 auto;
  background: repeating-linear-gradient(#b3b0a0 0 2px, transparent 2px 4px);
}
.grip.first { width: 11px; }

/* workspace */
.workspace { display: flex; flex: 1; min-height: 0; }
.navigator { display: flex; flex-direction: column; flex: none; width: 227px; padding: 2px 0 3px; }
.tabs { display: flex; gap: 2px; flex: none; height: 28px; }
.tab {
  display: flex; align-items: center; justify-content: center;
  width: 30px; height: 27px; background: #f0eee3;
  border: 1px solid #a9b4b8; border-bottom: 0; border-radius: 3px 3px 0 0;
}
.tab svg { width: 20px; height: 20px; stroke: #222; }
.tab.active { width: 35px; height: 28px; margin-right: -2px; background: #fcfcfc; border-color: #fcfcfc; border-top: 2px solid #e8a33c; }
.panel {
  display: flex; flex-direction: column; flex: 1; min-height: 0;
  padding: 1px 1px 1px; background: #fcfcfc; border: 1px solid #7f9db9;
}
.panel-buttons { display: flex; gap: 2px; flex: none; padding-left: 1px; margin-bottom: 2px; }
.panel-buttons button {
  display: flex; align-items: center; justify-content: center;
  width: 78px; height: 18px; padding-left: 12px; background: #f6f5ef;
  border: 1px solid #24507c; border-radius: 3px;
}
.panel-buttons button::after {
  content: ""; margin-left: 6px; border: 4px solid transparent; border-top-color: #222; border-bottom: 0;
}
.tree-box {
  display: flex; flex-direction: column; flex: 1; min-height: 0;
  background: #fff; border: 1px solid #7f9db9;
}
.tree-head { flex: none; height: 17px; background: #ece9d8; border-bottom: 1px solid #c5c2b2; }
.tree-body { display: flex; flex: 1; min-height: 0; }
.tree { flex: 1; margin: 0; padding: 0; list-style: none; overflow: hidden; }
.tree li {
  position: relative; display: flex; align-items: center;
  height: 16px; padding-left: 22px; white-space: nowrap;
  background:
    repeating-linear-gradient(#aaa 0 1px, transparent 1px 2px) 10px 0 / 1px 16px no-repeat,
    repeating-linear-gradient(90deg, #aaa 0 1px, transparent 1px 2px) 10px 8px / 11px 1px no-repeat;
}
.tree li svg { width: 16px; height: 16px; margin-right: 3px; }
.tree .en, .panel-buttons .en { padding-top: 2px; }
.has-kids::before {
  content: ""; box-sizing: border-box; position: absolute; left: 6px; top: 4px; width: 9px; height: 9px;
  border: 1px solid #7c8a98;
  background:
    linear-gradient(#000, #000) 1px 3px / 5px 1px no-repeat,
    linear-gradient(#000, #000) 3px 1px / 1px 5px no-repeat, #eee;
}
.scrollbar { display: flex; flex-direction: column; flex: none; width: 16px; background: #f4f3ee; }
.scrollbar button {
  display: flex; align-items: center; justify-content: center;
  width: 15px; height: 16px; background: #c6d5fb; border: 1px solid #e3ebff; border-radius: 2px;
}
.scrollbar svg { width: 10px; height: 10px; }
.track { display: flex; flex-direction: column; flex: 1; }
.thumb {
  height: 84%; margin-top: 41px; width: 14px; border: 1px solid #9db5ee; border-radius: 2px;
  background:
    repeating-linear-gradient(#8ca8e4 0 1px, #eef4ff 1px 2px) 50% 50% / 6px 8px no-repeat,
    linear-gradient(90deg, #cbdafc, #b9ccfa);
}

.splitter { display: flex; flex: none; width: 18px; }
.hatches {
  display: flex; flex-direction: column; align-items: center; justify-content: center; gap: 106px;
  width: 11px; padding-left: 3px;
}
.hatch {
  display: flex; align-items: center; justify-content: center; width: 6px; height: 104px;
  background: repeating-conic-gradient(#b0ad9f 0 25%, #dedbcd 0 50%) 0 0 / 4px 4px;
}
.hatch svg { width: 6px; height: 20px; stroke: #1010a0; stroke-width: 2; }
.rails {
  display: flex; align-items: center; width: 7px;
  background: linear-gradient(90deg, #6c83bd 0 1px, #ece9d8 1px 3px, #6c83bd 3px 4px, #ece9d8 4px 6px, #6c83bd 6px);
}
.dots {
  display: flex; flex-direction: column; justify-content: space-between; width: 6px; height: 106px;
  background: repeating-linear-gradient(#22408a 0 1px, #ece9d8 1px 3px) 3px 0 / 1px 106px no-repeat, #ece9d8;
}
.dots svg { width: 6px; height: 8px; stroke: #1010a0; stroke-width: 2; }

.viewport {
  flex: 1; min-width: 0; border-top: 1px solid #8a887e;
  background: linear-gradient(#9c9a8f, #bcb9ac 42%, #d3d1c6 78%, #e0dfd7);
}
.viewport svg { width: 100%; height: 100%; }

.feature-bar { display: flex; flex: none; width: 69px; }
.feature-col { width: 41px; }
.feature-col.narrow { width: 28px; }
.pair { display: flex; align-items: center; }
.bar { display: block; height: 13px; padding: 6px 1px 0 2px; }
.bar::before {
  content: ""; display: block; height: 2px;
  background: repeating-linear-gradient(90deg, #a5a290 0 2px, transparent 2px 4px);
}
.bar.first { height: 11px; padding-top: 4px; }

/* dashboard */
.dash-tabs {
  display: flex; align-items: center; gap: 11px; flex: none;
  height: 26px; padding-left: 7px; color: #a5a290; border-bottom: 1px solid #aaa798;
}
.dash-tabs svg { width: 18px; height: 18px; margin-right: -5px; }
.dashboard {
  display: flex; align-items: center; flex: none;
  height: 34px; padding: 0 6px; border-top: 1px solid #fff; border-bottom: 1px solid #aaa798;
}
.gap { width: 8px; }
.drop.dim { color: #c0bdad; }
.combo { position: relative; flex: none; height: 18px; }
.combo select {
  appearance: none; display: block; width: 100%; height: 100%; padding: 0 2px; border-radius: 0;
  background: #fff; border: 1px solid #7f9db9;
}
.combo select:disabled {
  color: #a5a290; background: #efede2; border-color: #c9c7ba; opacity: 1;
  font: 11px/16px "Liberation Mono", monospace;
}
.combo svg {
  position: absolute; right: 1px; top: 1px; width: 16px; height: 16px; padding: 3px;
  background: #c6d5fb; border-radius: 2px; pointer-events: none;
}
.depth { width: 88px; margin: 0 1px 0 3px; }
.depth svg { background: #f5f4ee; opacity: .5; }
.dash-right { display: flex; align-items: center; gap: 1px; margin-left: auto; }
.play { width: 26px; height: 26px; padding: 2px; background: #fff; border: 2px solid #1c3f94; border-radius: 3px; margin-right: 1px; }
.play svg { width: 18px; height: 18px; }
.preview {
  display: flex; align-items: center; gap: 3px; width: 47px; height: 27px; padding-left: 4px;
  border: 1px solid #fff; border-top-color: #8a887c; border-left-color: #8a887c; border-radius: 3px;
}
.preview input {
  appearance: none; width: 13px; height: 13px; margin: 0; border: 1px solid #b5b2a2; background: #f5f4ee;
}
.preview input:checked::before {
  content: ""; display: block; width: 5px; height: 2px; margin: 2px;
  border: 2px solid #a5a290; border-top: 0; border-right: 0; transform: rotate(-45deg);
}
.preview svg { width: 22px; height: 14px; stroke: #5b4a3a; }

/* message area and status */
.footer { position: relative; flex: none; }
.message {
  display: flex; justify-content: space-between; align-items: center;
  height: 36px; padding: 0 1px 0 6px; background: #ebe9e4; border-bottom: 1px solid #aaa798;
}
.message p { display: flex; align-items: center; gap: 5px; margin: 0; }
.message p::before { content: ""; width: 5px; height: 5px; border-radius: 50%; background: #0808a8; }
.message .scrollbar { position: relative; z-index: 1; gap: 1px; }
.status { display: flex; height: 25px; }
.status-left { flex: 1; border-right: 1px solid #aaa798; }
.status-filter {
  display: flex; align-items: center; justify-content: flex-end;
  width: 279px; padding-right: 2px; border-right: 1px solid #aaa798;
}
.filter { width: 179px; }
.light { width: 12px; height: 20px; margin: 4px 38px 0 7px; stroke: #999; }
.watermark {
  position: absolute; right: 0; bottom: 0; display: flex;
  width: 212px; height: 62px; padding-left: 2px; background: rgba(255, 255, 255, .25);
}
.watermark > svg { flex: none; width: 60px; height: 60px; }
.brand { flex: 1; }
.brand strong {
  display: block; padding: 1px 0 0 8px; color: rgba(112, 186, 126, .75);
  font-size: 29px; line-height: 34px; font-weight: 700; white-space: nowrap;
}
.brand span {
  display: block; margin: 3px 0 0 -3px; color: rgba(150, 190, 170, .5);
  font: 15px/20px "Noto Sans", sans-serif;
}
.taskbar { display: flex; flex: none; height: 4px; }
.start { width: 94px; background: #4aa04a; }
.tasks { flex: 1; background: #2166d8; }
.tray { width: 76px; background: #1292e4; }
```
